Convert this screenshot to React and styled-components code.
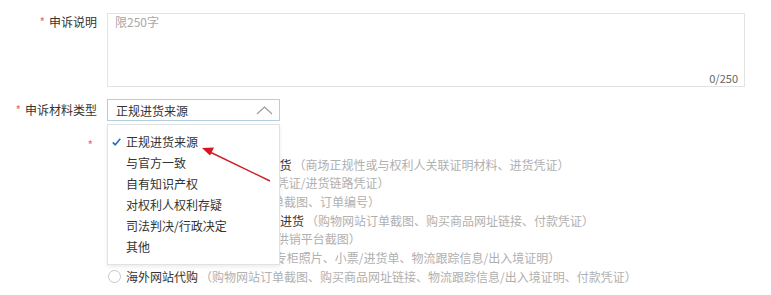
import React from 'react';
import styled, { createGlobalStyle } from 'styled-components';

const Global = createGlobalStyle`
  html, body { margin: 0; padding: 0; background: #fff; }
  body {
    font-family: "Noto Sans CJK SC", "Noto Sans", sans-serif;
    font-size: 12px;
    color: #333;
  }
`;

const Page = styled.div`
  position: relative;
  width: 771px;
  height: 295px;
  overflow: hidden;
  padding-top: 13px;
  box-sizing: border-box;
`;

const Row = styled.div`
  display: flex;
  align-items: flex-start;
  margin-bottom: ${(p) => p.$mb || 0}px;
`;

const Label = styled.div`
  width: 97px;
  margin-right: 10px;
  text-align: right;
  line-height: ${(p) => p.$lh}px;
  color: #333;
  white-space: nowrap;
`;

const Star = styled.span`
  color: #f06a6a;
  margin-right: 4px;
`;

const AreaWrap = styled.div`
  position: relative;
  width: 638px;
  height: 74px;
`;

const TextArea = styled.textarea`
  width: 100%;
  height: 100%;
  box-sizing: border-box;
  border: 1px solid #e3e3e3;
  padding: 0 7px;
  resize: none;
  outline: none;
  font-family: inherit;
  font-size: 12px;
  line-height: 16px;
  color: #333;
  &::placeholder { color: #a8a8a8; }
`;

const Counter = styled.span`
  position: absolute;
  right: 7px;
  bottom: 2px;
  font-size: 11px;
  color: #666;
  background: #fff;
  line-height: 14px;
`;

const Select = styled.div`
  width: 173px;
  height: 22px;
  box-sizing: border-box;
  border: 1px solid #b3cfe3;
  display: flex;
  align-items: center;
  justify-content: space-between;
  padding: 0 6px 0 8px;
  color: #333;
`;

const RadioGroup = styled.div`
  display: flex;
  flex-direction: column;
`;

const RadioLine = styled.div`
  display: flex;
  align-items: center;
  height: 18.7px;
  white-space: nowrap;
`;

const Circle = styled.span`
  width: 11px;
  height: 11px;
  border: 1px solid #c8c8c8;
  border-radius: 50%;
  margin: 0 5px 0 1px;
  flex: none;
`;

const OptName = styled.span`
  color: #333;
`;

const OptDesc = styled.span`
  color: #b0b0b0;
  margin-left: 2px;
`;

const Dropdown = styled.div`
  position: absolute;
  left: 107px;
  top: 124px;
  width: 173px;
  height: 141px;
  box-sizing: border-box;
  background: #fff;
  border: 1px solid #e2e2e2;
  box-shadow: 0 2px 4px rgba(0, 0, 0, 0.08);
  padding-top: 6px;
`;

const Item = styled.div`
  display: flex;
  align-items: center;
  height: 21px;
  padding-left: 4px;
  color: #333;
`;

const CheckSlot = styled.span`
  width: 14px;
  display: flex;
  align-items: center;
`;

const ArrowLayer = styled.svg`
  position: absolute;
  left: 0;
  top: 0;
  pointer-events: none;
`;

const options = [
  { name: '从品牌方/经销商/代理商处进货', desc: '（商场正规性或与权利人关联证明材料、进货凭证）' },
  { name: '品牌/授权经销商进货', desc: '（进货凭证/进货链路凭证）' },
  { name: '电商平台购买', desc: '（购物网站订单截图、订单编号）' },
  { name: '从品牌官方网站 / 官方旗舰店进货', desc: '（购物网站订单截图、购买商品网址链接、付款凭证）' },
  { name: '分销平台进货', desc: '（采购单截图/供销平台截图）' },
  { name: '海外专柜 / 门店购买', desc: '（门店/专柜照片、小票/进货单、物流跟踪信息/出入境证明）' },
  { name: '海外网站代购', desc: '（购物网站订单截图、购买商品网址链接、物流跟踪信息/出入境证明、付款凭证）' },
];

const items = ['正规进货来源', '与官方一致', '自有知识产权', '对权利人权利存疑', '司法判决/行政决定', '其他'];

export default function App() {
  return (
    <>
      <Global />
      <Page>
        <Row $mb={12}>
          <Label $lh={18}><Star>*</Star>申诉说明</Label>
          <AreaWrap>
            <TextArea placeholder="限250字" />
            <Counter>0/250</Counter>
          </AreaWrap>
        </Row>
        <Row $mb={15}>
          <Label $lh={22}><Star>*</Star>申诉材料类型</Label>
          <Select>
            <span>正规进货来源</span>
            <svg width="17" height="10" viewBox="0 0 17 10">
              <polyline points="1,9 8.5,2 16,9" fill="none" stroke="#9a9a9a" strokeWidth="1.1" />
            </svg>
          </Select>
        </Row>
        <Row>
          <Label $lh={18.7}><Star>*</Star></Label>
          <RadioGroup>
            <RadioLine />
            {options.map((o) => (
              <RadioLine key={o.name}>
                <Circle />
                <OptName>{o.name}</OptName>
                <OptDesc>{o.desc}</OptDesc>
              </RadioLine>
            ))}
          </RadioGroup>
        </Row>
        <Dropdown>
          {items.map((t, i) => (
            <Item key={t}>
              <CheckSlot>
                {i === 0 && (
                  <svg width="9" height="8" viewBox="0 0 9 8">
                    <polyline points="0.8,4.4 3.2,6.8 8.3,0.8" fill="none" stroke="#1f6fc2" strokeWidth="1.6" />
                  </svg>
                )}
              </CheckSlot>
              <span>{t}</span>
            </Item>
          ))}
        </Dropdown>
        <ArrowLayer width="771" height="295" viewBox="0 0 771 295">
          <line x1="270" y1="181" x2="211" y2="152.5" stroke="#cf2027" strokeWidth="1.5" />
          <polygon points="202,148 214,147.5 210,155.5" fill="#d8141c" />
        </ArrowLayer>
      </Page>
    </>
  );
}
